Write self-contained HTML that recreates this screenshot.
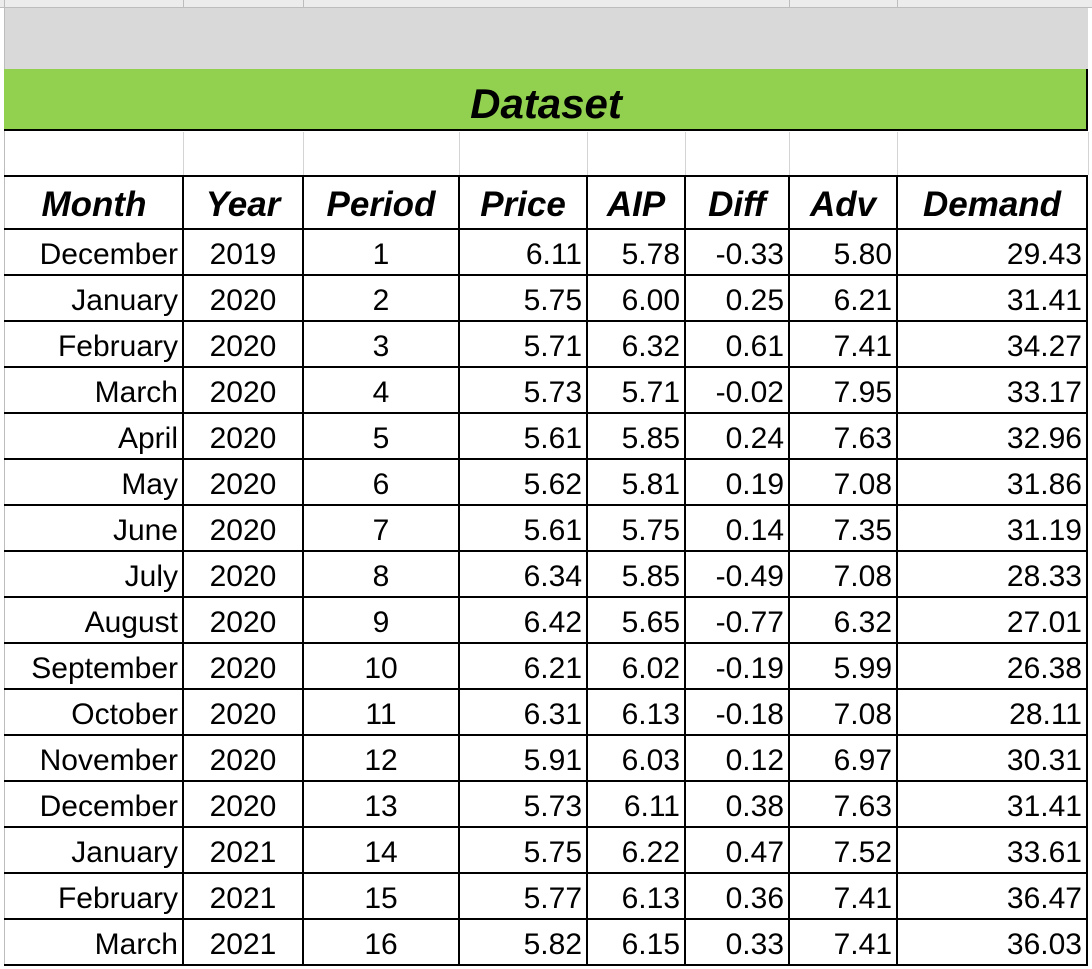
<!DOCTYPE html>
<html><head><meta charset="utf-8"><style>
body{margin:0;width:1092px;height:966px;overflow:hidden;background:#fff;font-family:"Liberation Sans",sans-serif;position:relative}
.a{position:absolute}
.c{position:absolute;box-sizing:border-box;font-size:30px;line-height:48px;padding:0 5px;white-space:nowrap;color:#000}
.h{font-weight:bold;font-style:italic;font-size:35px;line-height:56px;text-align:center;padding:0}
.r{text-align:right}.m{text-align:center}
</style></head><body>
<div class="a" style="left:0;top:0;width:1092px;height:7px;background:#ececec;border-bottom:1px solid #bdbdbd"></div>
<div class="a" style="left:183px;top:0;width:1px;height:7px;background:#bdbdbd"></div>
<div class="a" style="left:303px;top:0;width:1px;height:7px;background:#bdbdbd"></div>
<div class="a" style="left:789px;top:0;width:1px;height:7px;background:#bdbdbd"></div>
<div class="a" style="left:897px;top:0;width:1px;height:7px;background:#bdbdbd"></div>
<div class="a" style="left:4px;top:8px;width:1084px;height:61px;background:#d9d9d9"></div>
<div class="a" style="left:4px;top:0;width:1px;height:966px;background:#bdbdbd"></div>
<div class="a" style="left:4px;top:69px;width:1084px;height:62px;background:#92d050;border-right:2px solid #000;border-bottom:2px solid #000;box-sizing:border-box"></div>
<div class="a" style="left:4px;top:70px;width:1084px;height:62px;text-align:center;font-weight:bold;font-style:italic;font-size:42px;line-height:68px">Dataset</div>
<div class="a" style="left:183px;top:132px;width:1px;height:43px;background:#d4d4d4"></div>
<div class="a" style="left:303px;top:132px;width:1px;height:43px;background:#d4d4d4"></div>
<div class="a" style="left:459px;top:132px;width:1px;height:43px;background:#d4d4d4"></div>
<div class="a" style="left:587px;top:132px;width:1px;height:43px;background:#d4d4d4"></div>
<div class="a" style="left:685px;top:132px;width:1px;height:43px;background:#d4d4d4"></div>
<div class="a" style="left:789px;top:132px;width:1px;height:43px;background:#d4d4d4"></div>
<div class="a" style="left:897px;top:132px;width:1px;height:43px;background:#d4d4d4"></div>
<div class="a" style="left:1088px;top:132px;width:1px;height:43px;background:#d4d4d4"></div>
<div id="t"></div>
<script>
var cols=[5,183,303,459,587,685,789,897,1087];
var al=['r','m','m','r','r','r','r','r'];
var hd=['Month','Year','Period','Price','AIP','Diff','Adv','Demand'];
var d=[["December",2019,1,"6.11","5.78","-0.33","5.80","29.43"],["January",2020,2,"5.75","6.00","0.25","6.21","31.41"],["February",2020,3,"5.71","6.32","0.61","7.41","34.27"],["March",2020,4,"5.73","5.71","-0.02","7.95","33.17"],["April",2020,5,"5.61","5.85","0.24","7.63","32.96"],["May",2020,6,"5.62","5.81","0.19","7.08","31.86"],["June",2020,7,"5.61","5.75","0.14","7.35","31.19"],["July",2020,8,"6.34","5.85","-0.49","7.08","28.33"],["August",2020,9,"6.42","5.65","-0.77","6.32","27.01"],["September",2020,10,"6.21","6.02","-0.19","5.99","26.38"],["October",2020,11,"6.31","6.13","-0.18","7.08","28.11"],["November",2020,12,"5.91","6.03","0.12","6.97","30.31"],["December",2020,13,"5.73","6.11","0.38","7.63","31.41"],["January",2021,14,"5.75","6.22","0.47","7.52","33.61"],["February",2021,15,"5.77","6.13","0.36","7.41","36.47"],["March",2021,16,"5.82","6.15","0.33","7.41","36.03"]];
var h='';
h+='<div class="a" style="left:4px;top:175px;width:1084px;height:2px;background:#000"></div>';
for(var i=0;i<8;i++){h+='<div class="c h" style="left:'+cols[i]+'px;top:177px;width:'+(cols[i+1]-cols[i])+'px">'+hd[i]+'</div>';}
for(var r=0;r<=16;r++){var y=229+r*46;h+='<div class="a" style="left:4px;top:'+(y-1)+'px;width:1084px;height:2px;background:#000"></div>';}
for(var i=1;i<9;i++){h+='<div class="a" style="left:'+(cols[i]-1)+'px;top:175px;width:2px;height:791px;background:#000"></div>';}
for(var r=0;r<16;r++){for(var i=0;i<8;i++){var w=cols[i+1]-cols[i];h+='<div class="c '+al[i]+'" style="left:'+cols[i]+'px;top:'+(231+r*46)+'px;width:'+w+'px">'+d[r][i]+'</div>';}}
document.getElementById('t').innerHTML=h;
</script>
</body></html>
